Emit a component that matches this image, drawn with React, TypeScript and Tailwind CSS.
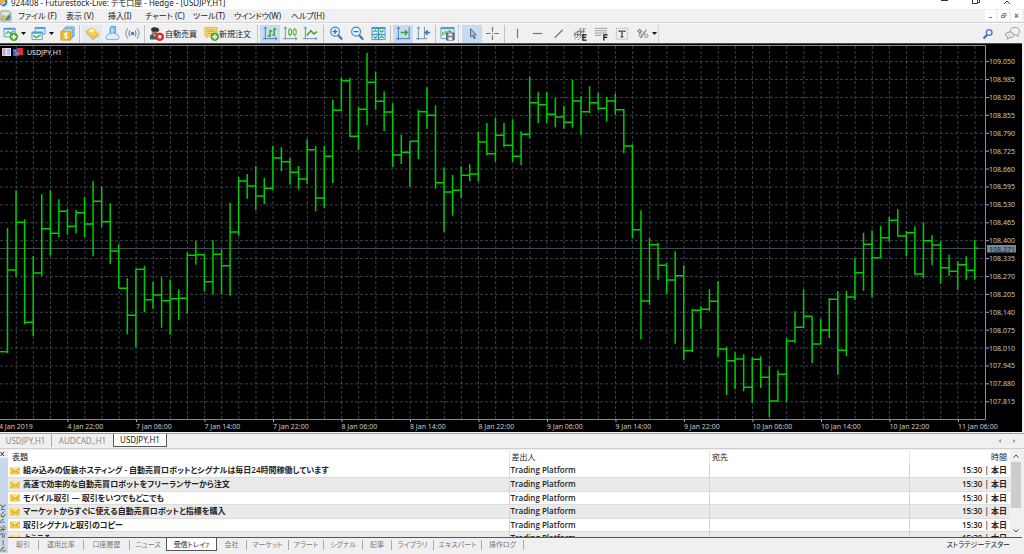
import { useState } from "react";
import type { ReactNode } from "react";
import clsx from "clsx";

const FIRST_X = 7;
const STEP = 8.56;
const TOP = 44;
const UNITS = 3;

// high, low, close (chart units below the top edge)
const bars = [
  [552, 928, 678], [439, 698, 535], [526, 841, 835], [636, 876, 687], [451, 695, 554],
  [439, 635, 568], [466, 580, 502], [495, 572, 547], [498, 568, 506], [460, 579, 540],
  [411, 637, 472], [428, 550, 533], [478, 660, 621], [601, 733, 733], [703, 871, 814],
  [674, 910, 676], [666, 805, 767], [713, 794, 753], [700, 851, 770], [707, 872, 764],
  [736, 829, 763], [625, 809, 634], [591, 662, 632], [631, 741, 713], [589, 751, 631],
  [616, 749, 665], [476, 755, 564], [399, 575, 411], [390, 464, 426], [366, 499, 456],
  [402, 480, 433], [306, 439, 342], [310, 382, 353], [342, 422, 385], [366, 436, 405],
  [286, 420, 317], [307, 502, 462], [305, 491, 337], [167, 417, 199], [101, 200, 110],
  [101, 280, 277], [188, 318, 196], [26, 243, 115], [83, 197, 172], [142, 262, 204],
  [178, 369, 333], [272, 360, 325], [291, 428, 292], [197, 345, 203], [130, 254, 214],
  [184, 434, 416], [371, 564, 444], [393, 515, 439], [367, 462, 394], [361, 412, 390],
  [263, 412, 294], [237, 334, 329], [222, 353, 274], [237, 310, 304], [226, 354, 337],
  [262, 364, 271], [98, 283, 176], [145, 238, 182], [145, 237, 211], [161, 250, 219],
  [186, 254, 235], [107, 251, 171], [157, 274, 203], [127, 207, 176], [146, 199, 193],
  [159, 233, 171], [149, 212, 197], [194, 328, 306], [301, 583, 557], [499, 886, 771],
  [581, 782, 602], [596, 707, 664], [656, 749, 708], [622, 899, 695], [664, 949, 920],
  [795, 924, 799], [787, 854, 796], [736, 802, 772], [712, 938, 915], [908, 1053, 950],
  [925, 1036, 945], [931, 1042, 1030], [940, 1076, 946], [937, 1031, 1000], [965, 1119, 1071],
  [979, 1074, 991], [883, 1074, 891], [802, 898, 850], [736, 852, 817], [817, 958, 900],
  [824, 901, 858], [762, 882, 766], [742, 992, 919], [740, 936, 759], [643, 768, 686],
  [566, 740, 601], [559, 760, 641], [546, 642, 581], [518, 593, 529], [496, 578, 576],
  [561, 636, 566], [547, 692, 690], [537, 702, 590], [574, 664, 603], [592, 719, 671],
  [632, 695, 682], [652, 738, 662], [637, 707, 679], [588, 707, 613],
];

const times = [
  "4 Jan 2019", "4 Jan 22:00", "7 Jan 06:00", "7 Jan 14:00", "7 Jan 22:00",
  "8 Jan 06:00", "8 Jan 14:00", "8 Jan 22:00", "9 Jan 06:00", "9 Jan 14:00",
  "9 Jan 22:00", "10 Jan 06:00", "10 Jan 14:00", "10 Jan 22:00", "11 Jan 06:00",
];

const prices = Array.from({ length: 20 }, (_, i) => (109.05 - i * 0.065).toFixed(3));

const menus = [
  { label: "ファイル (F)", w: "w-12" },
  { label: "表示 (V)", w: "w-[42px]" },
  { label: "挿入(I)", w: "w-[37px]" },
  { label: "チャート (C)", w: "w-12" },
  { label: "ツール(T)", w: "w-[41px]" },
  { label: "ウインドウ(W)", w: "w-[57px]" },
  { label: "ヘルプ(H)", w: "w-10" },
];

const mails = [
  "組み込みの仮装ホスティング - 自動売買ロボットとシグナルは毎日24時間稼働しています",
  "高速で効率的な自動売買ロボットをフリーランサーから注文",
  "モバイル取引 — 取引をいつでもどこでも",
  "マーケットからすぐに使える自動売買ロボットと指標を購入",
  "取引シグナルと取引のコピー",
  "ようこそ",
];

const toolTabs = [
  { label: "取引", w: "w-[31px]" },
  { label: "運用比率", w: "w-[45px]" },
  { label: "口座履歴", w: "w-[46px]" },
  { label: "ニュース", w: "w-9" },
  { label: "受信トレイ", w: "w-[51px]", count: 7 },
  { label: "会社", w: "w-[30px]" },
  { label: "マーケット", w: "w-[42px]" },
  { label: "アラート", w: "w-[35px]" },
  { label: "シグナル", w: "w-[39px]" },
  { label: "記事", w: "w-[29px]" },
  { label: "ライブラリ", w: "w-[42px]" },
  { label: "エキスパート", w: "w-12" },
  { label: "操作ログ", w: "w-[42px]" },
];

const Icon = ({ children }: { children: ReactNode }) => (
  <svg viewBox="0 0 16 16" className="h-[15px] w-[15px] shrink-0" fill="none" aria-hidden="true">{children}</svg>
);

const Caret = () => (
  <svg viewBox="0 0 5 3" className="h-[3px] w-[5px] shrink-0" aria-hidden="true"><path d="M0 0h5L2.500 3z" fill="#111" /></svg>
);

const Sep = () => <div className="h-[18px] w-[5px] shrink-0 border-l-2 border-transparent"><div className="h-full w-px bg-[#c4c4c4]" /></div>;

const Tool = ({ label, w = "w-5", on, soft, children }: { label: string; w?: string; on?: boolean; soft?: boolean; children: ReactNode }) => (
  <button
    type="button"
    aria-label={label}
    className={clsx("flex h-[18px] shrink-0 items-center justify-center", w, on && "bg-[#c2dcf3]", soft && "bg-[#dfeaf5]")}
  >
    {children}
  </button>
);

const Plus = () => (
  <>
    <circle cx="11.500" cy="11.500" r="4" fill="#5cb83f" stroke="#3c9a26" />
    <path d="M11.500 9v5M9 11.500h5" stroke="#fff" strokeWidth="1.500" />
  </>
);

function Toolbar() {
  return (
    <div className="flex h-5 items-center border-t border-[#fafafa] bg-[#f0f0f0] pl-px">
      <button type="button" aria-label="新規チャート" className="flex h-[18px] w-7 shrink-0 items-center gap-[3px] pl-0.5">
        <Icon>
          <path d="M1 2.500h12v9H1z" fill="#eaf6fd" stroke="#4ba0d8" />
          <path d="M1 3h12" stroke="#4ba0d8" strokeWidth="2" />
          <path d="M2.500 9l3-3 2 2 4-3" stroke="#4cae3a" strokeWidth="1.300" />
          <Plus />
        </Icon>
        <Caret />
      </button>
      <button type="button" aria-label="プロファイル" className="flex h-[18px] w-7 shrink-0 items-center gap-[3px] pl-0.5">
        <Icon>
          <path d="M4.500 1.500h10.500v7H4.500z" fill="#d8eefa" stroke="#4ba0d8" />
          <path d="M4.500 2.200h10.500" stroke="#4ba0d8" strokeWidth="2" />
          <path d="M1 6.500h11v8H1z" fill="#eaf6fd" stroke="#4ba0d8" />
          <path d="M1 7.200h11" stroke="#4ba0d8" strokeWidth="2" />
          <path d="M2.500 10l3 2.500 5-3" stroke="#4cae3a" strokeWidth="1.500" />
        </Icon>
        <Caret />
      </button>
      <Tool label="気配値表示">
        <Icon>
          <path d="M6 1h9v10H6z" fill="#b9dcf4" stroke="#4b9cd8" />
          <path d="M4 3h9v10H4z" fill="#d9edfa" stroke="#4b9cd8" />
          <path d="M1 5.500h10.500V15H1z" fill="#f0b92f" stroke="#d29a1a" />
          <path d="M8.500 8H5.500q-1.200 1.200 0 2.200l1.500.2q1.500 1 0 2.200H4.500M6.500 6.500v7.500" stroke="#fffbe8" strokeWidth="1.200" />
        </Icon>
      </Tool>
      <Sep />
      <Tool label="ナビゲータ" soft>
        <Icon>
          <path d="M1 4.500v3L8.500 15l6.500-4.500v-3L8.500 12z" fill="#d69a22" />
          <path d="M1 4.500L7.500 1 15 7.500 8.500 12z" fill="#f8cf55" />
          <path d="M1 6l7.500 7.500L15 9" stroke="#fbe6a0" />
          <path d="M4 5l3.500-2 2.500 2-3 2z" fill="#fff8dc" />
        </Icon>
      </Tool>
      <Tool label="ツールボックス">
        <Icon>
          <path d="M5.500 1.500l2-1h3.500v8H5.500z" fill="#8fcaf5" stroke="#4297dd" />
          <path d="M7.500 3v5" stroke="#fff" />
          <path d="M4 8.500q4-2.500 8 0 3 1 3 3.500 0 2.500-2.500 2.500h-9Q1 14.500 1 12.300 1 9.500 4 8.500z" fill="#e1eefa" stroke="#6baadf" />
        </Icon>
      </Tool>
      <Tool label="シグナル">
        <Icon>
          <circle cx="8" cy="8" r="1.900" fill="#3f7fd0" />
          <path d="M5.500 5a4.200 4.200 0 0 0 0 6M10.500 5a4.200 4.200 0 0 1 0 6" stroke="#6d87a3" strokeWidth="1.200" />
          <path d="M3.200 2.500a8 8 0 0 0 0 11M12.800 2.500a8 8 0 0 1 0 11" stroke="#8d9eaf" strokeWidth="1.200" />
        </Icon>
      </Tool>
      <Sep />
      <button type="button" className="flex h-[18px] w-[55px] shrink-0 items-center gap-px pl-0.5 text-[8px] whitespace-nowrap">
        <Icon>
          <path d="M2 3l3-2 5 1 1 3-3 2-5-1z" fill="#2f3338" />
          <path d="M3 6h6v4H3z" fill="#b78252" />
          <path d="M1 10l3-2h5l3 3v3.500H1z" fill="#4d5863" />
          <path d="M4 8l2.500 3L9 8" stroke="#dce2e8" />
          <circle cx="11.500" cy="11.500" r="4" fill="#e13b2c" stroke="#b62519" />
          <path d="M10 10h3v3h-3z" fill="#fff" />
        </Icon>
        自動売買
      </button>
      <button type="button" className="flex h-[18px] w-[53px] shrink-0 items-center px-0.5 text-[8px] whitespace-nowrap">
        <Icon>
          <path d="M1 1.500h13v9H5l-2 2v-2H1z" fill="#f8dc70" stroke="#d8b448" />
          <path d="M3 4h9M3 6h9M3 8h6" stroke="#b8983c" strokeWidth="0.800" />
          <Plus />
        </Icon>
        新規注文
      </button>
      <Sep />
      <Tool label="バーチャート" on>
        <Icon>
          <path d="M2.500 1v13M1 3l1.500-2L4 3M0 13.500h15M13 12l2 1.500-2 1.500" stroke="#4d79a8" />
          <path d="M7.500 4v8M5 10.500h2.500M7.500 5.500H10M12 2v9M10 9.500h2M12 3.500h2" stroke="#38a42c" strokeWidth="1.500" />
        </Icon>
      </Tool>
      <Tool label="ローソク足">
        <Icon>
          <path d="M2.500 1v13M1 3l1.500-2L4 3M0 13.500h15M13 12l2 1.500-2 1.500" stroke="#6b8db2" />
          <path d="M7.500 2v9M12.500 2v9" stroke="#44a63a" />
          <path d="M6 4h3v5H6zM11 4h3v5h-3z" fill="#e2f7df" stroke="#44a63a" />
        </Icon>
      </Tool>
      <Tool label="ラインチャート" w="w-[21px]">
        <Icon>
          <path d="M2.500 1v13M1 3l1.500-2L4 3M0 13.500h15M13 12l2 1.500-2 1.500" stroke="#6b8db2" />
          <path d="M4 10l4.500-5 3 3.500L15 6" stroke="#44a63a" strokeWidth="1.600" />
        </Icon>
      </Tool>
      <Sep />
      <Tool label="拡大" w="w-[21px]">
        <Icon>
          <path d="M9.500 9.500l4.500 5" stroke="#3f76b8" strokeWidth="2.400" />
          <circle cx="6.500" cy="6" r="4.700" fill="#e2f2fc" stroke="#3f8fd0" strokeWidth="1.300" />
          <path d="M6.500 3.500v5M4 6h5" stroke="#2d6fae" strokeWidth="1.300" />
        </Icon>
      </Tool>
      <Tool label="縮小" w="w-[21px]">
        <Icon>
          <path d="M9.500 9.500l4.500 5" stroke="#3f76b8" strokeWidth="2.400" />
          <circle cx="6.500" cy="6" r="4.700" fill="#e2f2fc" stroke="#3f8fd0" strokeWidth="1.300" />
          <path d="M4 6h5" stroke="#2d6fae" strokeWidth="1.300" />
        </Icon>
      </Tool>
      <Tool label="タイル表示" w="w-5">
        <Icon>
          <path d="M1 1.500h14v13H1z" fill="#edf8ff" stroke="#3f93d3" />
          <path d="M1 2.500h14M1 9h14M8 1v14" stroke="#3f93d3" strokeWidth="1.600" />
          <path d="M2.500 6.500l2-2 2 2M9.500 4.500l2 2 2-2M2.500 11l2 2 2-2M9.500 13l2-2 2 2" stroke="#41aa32" strokeWidth="1.300" />
        </Icon>
      </Tool>
      <Sep />
      <Tool label="自動スクロール" on>
        <Icon>
          <path d="M2.500 1v14M0 13.500h15M14 1v12.500M1 3l1.500-2L4 3" stroke="#4d79a8" />
          <path d="M5 7h7M9.500 4.500L12 7 9.500 9.500" stroke="#3aa42e" strokeWidth="1.600" />
        </Icon>
      </Tool>
      <Tool label="チャートシフト">
        <Icon>
          <path d="M2.500 1v14M0 13.500h12M9 1v12.500M1 3l1.500-2L4 3" stroke="#6b8db2" />
          <path d="M10 7h5M12.500 4.500L10 7l2.500 2.500" stroke="#3378c4" strokeWidth="1.500" />
        </Icon>
      </Tool>
      <Sep />
      <Tool label="定型チャート" w="w-[18px]">
        <Icon>
          <path d="M1 1.500h14v12H1z" fill="#e9f6fd" stroke="#4ba0d8" />
          <path d="M1 2.500h14" stroke="#4ba0d8" strokeWidth="2" />
          <path d="M3 10V6M5.500 9V5M7 7l3-2 3 2" stroke="#43a936" strokeWidth="1.300" />
          <path d="M7 7.500h8V15H7z" fill="#777f87" stroke="#565d64" />
          <path d="M9 8h4v2.500H9zM9 12h4v3H9z" fill="#edf0f2" />
        </Icon>
      </Tool>
      <div className="mx-0.5 h-[18px] w-0.5 border-l border-dotted border-[#a7a7a7]" />
      <Tool label="カーソル" on>
        <Icon><path d="M6 3v9l2-2 1.500 3.500 1.500-.700L9.500 9.500H12z" fill="#b8c1c9" stroke="#59636c" /></Icon>
      </Tool>
      <Tool label="十字カーソル">
        <Icon>
          <path d="M8 1v5M8 10v5M1 8h5M10 8h5" stroke="#777" strokeWidth="1.300" />
          <path d="M7.500 8h1" stroke="#777" />
        </Icon>
      </Tool>
      <Sep />
      <Tool label="垂直線"><Icon><path d="M8 3v10" stroke="#777" strokeWidth="1.300" /></Icon></Tool>
      <Tool label="水平線"><Icon><path d="M3 8h10" stroke="#777" strokeWidth="1.300" /></Icon></Tool>
      <Tool label="トレンドライン" w="w-[22px]"><Icon><path d="M4 12.500L12.500 4" stroke="#777" strokeWidth="1.300" /></Icon></Tool>
      <Tool label="チャネル" w="w-[22px]">
        <Icon>
          <path d="M1 10l8-8M2 14L14 2M5 15l6-6M2 6v6M5 5v7M8 3v8M11 2v6M1 9h9M4 6h9" stroke="#777" strokeWidth="0.900" />
          <path d="M14.500 9.500h-4v5.500h4M10.500 12.200h3.500" stroke="#111" strokeWidth="1.300" />
        </Icon>
      </Tool>
      <Tool label="フィボナッチ">
        <Icon>
          <path d="M1 2.500h13M1 5h13M1 7.500h13M1 10h7" stroke="#999" />
          <path d="M14.500 9.500h-4V15.500M10.500 12.200h3.500" stroke="#111" strokeWidth="1.300" />
        </Icon>
      </Tool>
      <Tool label="テキスト" w="w-[21px]">
        <Icon>
          <path d="M2.500 2.500h12v11.500h-12z" stroke="#999" strokeDasharray="1 1" />
          <path d="M5.500 6.500V5.500h6v1M8.500 5.500v6M7 11.500h3" stroke="#555" strokeWidth="1.500" />
        </Icon>
      </Tool>
      <button type="button" aria-label="オブジェクト" className="flex h-[18px] w-[27px] shrink-0 items-center gap-0.5 border-r border-[#d5d5d5] pl-[3px]">
        <Icon>
          <path d="M3 5.500l2-2 2 2-2 2zM6 13l6-9" stroke="#888" strokeWidth="1.300" />
          <circle cx="6" cy="10" r="1.500" stroke="#888" />
          <circle cx="12" cy="10.500" r="1.800" stroke="#888" />
          <path d="M8 6l2 2" stroke="#888" />
        </Icon>
        <Caret />
      </button>
      <div className="ml-auto flex items-center gap-2 pr-1">
        <Tool label="検索" w="w-4">
          <svg viewBox="0 0 16 16" className="h-3 w-3" fill="none" aria-hidden="true">
            <path d="M2 14l5-5" stroke="#4576ca" strokeWidth="3.200" />
            <circle cx="9.500" cy="6" r="3.800" fill="#e8f0fc" stroke="#4576ca" strokeWidth="1.800" />
          </svg>
        </Tool>
        <Tool label="チャット" w="w-4">
          <Icon>
            <path d="M10 1.500c3.500 0 5.500 1.800 5.500 4s-1 3-2 3.500l.5 2-2.500-1.500c-4 0-6-1.500-6-4s2-4 4.500-4z" fill="#f1f1f1" stroke="#999" />
            <path d="M5 6.500c3 0 4.500 1.300 4.500 3s-1.500 3-4.500 3L2.500 14l.3-2C1.500 11.500.5 10.700.5 9.500c0-1.700 1.700-3 4.500-3z" fill="#e4e4e4" stroke="#999" />
          </Icon>
        </Tool>
      </div>
    </div>
  );
}

function PriceChart() {
  const y = (v: number) => TOP + v / UNITS;
  return (
    <svg viewBox="0 43 1024 390" className="block w-full" role="img" aria-label="USDJPY,H1">
      <rect x="0" y="43" width="1024" height="390" fill="#f0f0f0" />
      <rect x="0" y="43" width="1022" height="389" fill="#000" />
      <path d="M0 43.500h1022" stroke="#4c4f4a" />
      {Array.from({ length: 57 }, (_, i) => 16.3 + i * STEP * 2).map((x) => (
        <path key={x} d={`M${x} 46V419`} stroke="#46525e" strokeWidth="0.800" strokeDasharray="3 2" />
      ))}
      {prices.map((p, i) => {
        const py = y(53 + i * 53.700);
        return (
          <g key={p}>
            <path d={`M0 ${py}H985`} stroke="#46525e" strokeWidth="0.800" strokeDasharray="3 2" />
            <path d={`M986 ${py}h3`} stroke="#aaa" />
            <text x="989" y={py + 2.500} fontSize="7" fill="#c8c8c8">{p}</text>
          </g>
        );
      })}
      <path d="M0 45.500H985.500V419.500H0" fill="none" stroke="#8c8c8c" />
      <path d="M0 248.500H985" stroke="#3e4a55" />
      {bars.map(([high, low, close], i) => {
        const x = FIRST_X + 0.500 + i * STEP;
        const next = i === bars.length - 1 ? x + 3 : x + STEP;
        return (
          <path key={i} d={`M${x} ${y(high)}V${y(low)}M${x} ${y(close)}H${next}`} stroke="#00cc00" strokeWidth="1.500" />
        );
      })}
      <path d={`M0 ${y(923)}H7.500`} stroke="#00cc00" strokeWidth="1.500" />
      {times.map((t, i) => (
        <g key={t}>
          {i > 0 && <path d={`M${i * 68.5 - 0.5} 420v2`} stroke="#aaa" />}
          <text x={i === 0 ? -1 : i * 68.5 - 1} y="428.500" fontSize="7" fill="#c8c8c8">{t}</text>
        </g>
      ))}
      <rect x="987" y="245" width="29" height="7.500" fill="#778899" />
      <text x="989" y="251.500" fontSize="7" fill="#18222c">108.371</text>
      <rect x="2" y="48" width="9" height="8" fill="#dfe3ff" />
      <path d="M2 48h4v8H2z" fill="#f0c0c8" />
      <path d="M7 50h3M7 52h3M7 54h3M3 50h2M3 52h2M3 54h2" stroke="#6a72cc" strokeWidth="0.700" />
      <path d="M13 49h6v7h-6z" fill="#3c5cc8" />
      <path d="M17 48h6v7h-5z" fill="#d4333c" />
      <path d="M14 50l3 3M15 55l4-2" stroke="#9aaef0" />
      <text x="27" y="54.500" fontSize="7" fill="#f0f0f0">USDJPY,H1</text>
    </svg>
  );
}

const Mail = () => (
  <svg viewBox="0 0 10 9" className="h-[9px] w-2.5 shrink-0" aria-hidden="true">
    <path d="M0 1h10v7.500H0z" fill="#f5cd4c" />
    <path d="M0 1h10L5 5.500z" fill="#fbe38a" />
    <path d="M1 2.500l4 3 4-3M1.500 7.500L4 5M8.500 7.500L6 5" fill="none" stroke="#cf9a28" strokeWidth="0.800" />
  </svg>
);

function Inbox() {
  return (
    <div className="flex h-[87px] overflow-hidden bg-white">
      <div className="min-w-0 flex-1 overflow-hidden">
        <table className="w-full table-fixed border-collapse font-['Open_Sans','Noto_Sans_CJK_JP',sans-serif] text-[8px] leading-[12px] whitespace-nowrap text-[#222]">
          <colgroup>
            <col className="w-[50%]" />
            <col className="w-[20%]" />
            <col className="w-[20%]" />
            <col className="w-[10%]" />
          </colgroup>
          <thead>
            <tr className="h-3.5 text-left">
              <th className="border-r border-[#e2e2e2] p-0 pl-1 font-normal">表題</th>
              <th className="border-r border-[#e2e2e2] p-0 pl-0.5 font-normal">差出人</th>
              <th className="border-r border-[#e2e2e2] p-0 pl-0.5 font-normal">宛先</th>
              <th className="p-0 pr-[3px] text-right font-normal">時間</th>
            </tr>
          </thead>
          <tbody>
            {mails.map((title) => (
              <tr key={title} className="h-[13px] border-b border-[#dcdcdc] font-semibold even:h-3.5 even:bg-[#eaeaea]">
                <td className="overflow-hidden border-r border-[#d4d4d4] p-0 pl-0.5">
                  <span className="flex items-center gap-[3px]"><Mail />{title}</span>
                </td>
                <td className="border-r border-[#d4d4d4] p-0 pl-px">Trading Platform</td>
                <td className="border-r border-[#d4d4d4] p-0" />
                <td className="p-0 pr-[3px] text-right">15:30 | 本日</td>
              </tr>
            ))}
          </tbody>
        </table>
      </div>
      <div className="flex w-3 flex-col items-center bg-[#f0f0f0]">
        <button type="button" aria-label="上へ" className="flex h-3 w-full items-center justify-center">
          <svg viewBox="0 0 6 4" className="h-1 w-1.5"><path d="M.5 3.500L3 1l2.500 2.500" fill="none" stroke="#444" /></svg>
        </button>
        <div className="h-[46px] w-2.5 bg-[#cdcdcd]" />
        <button type="button" aria-label="下へ" className="mt-auto flex h-3 w-full items-center justify-center">
          <svg viewBox="0 0 6 4" className="h-1 w-1.5"><path d="M.5.500L3 3 5.500.500" fill="none" stroke="#444" /></svg>
        </button>
      </div>
    </div>
  );
}

export default function App() {
  const [chartTab, setChartTab] = useState(2);
  const [toolTab, setToolTab] = useState("受信トレイ");

  return (
    <div className="flex min-h-screen flex-col overflow-hidden bg-[#f0f0f0] font-['Noto_Sans','Noto_Sans_CJK_JP',sans-serif] text-[#222] [font-feature-settings:'palt']">
      <header className="flex h-[9px] items-end justify-between overflow-hidden bg-white">
        <div className="flex items-end gap-[3px]">
          <svg viewBox="0 0 8 9" className="h-[9px] w-2" aria-hidden="true">
            <circle cx="3" cy="2" r="4.500" fill="#3d82be" />
            <path d="M0 0h5v4H0z" fill="#e9aa3c" />
            <path d="M0 6l5-4" stroke="#fff" />
          </svg>
          <h1 className="pb-px text-[8px] leading-[10px] whitespace-nowrap">924408 - Futurestock-Live: デモ口座 - Hedge - [USDJPY,H1]</h1>
        </div>
        <div className="flex h-full items-start">
          <button type="button" aria-label="最小化" className="w-8"><svg viewBox="0 0 32 5" className="h-[5px] w-8"><path d="M13 .5h7" stroke="#333" /></svg></button>
          <button type="button" aria-label="元に戻す" className="w-8"><svg viewBox="0 0 32 5" className="h-[5px] w-8"><path d="M12.500 0v3.500h5V0M17.500 2.500h2V0" fill="none" stroke="#333" /></svg></button>
          <button type="button" aria-label="閉じる" className="w-8"><svg viewBox="0 0 32 5" className="h-[5px] w-8"><path d="M12 4l3-3 3 3" fill="none" stroke="#333" /></svg></button>
        </div>
      </header>

      <nav className="flex h-[14px] items-center border-b border-[#d4d4d4]">
        <svg viewBox="0 0 12 12" className="mr-1.5 h-3 w-3 shrink-0" aria-hidden="true">
          <path d="M1 1h8l2 2v8H1z" fill="#dce7e8" stroke="#8c9ea6" />
          <path d="M1 8l3-3 2 2 4-4v7H1z" fill="#6fae76" />
          <circle cx="4" cy="8" r="2.500" fill="#e2b84e" />
          <path d="M6 10l4-4" stroke="#416f9c" strokeWidth="1.500" />
        </svg>
        {menus.map((m) => (
          <button key={m.label} type="button" className={clsx("shrink-0 text-left text-[8px] leading-3 whitespace-nowrap", m.w)}>{m.label}</button>
        ))}
        <div className="ml-auto flex gap-0.5 pr-0.5">
          <button type="button" aria-label="ウインドウを最小化" className="h-[11px] w-[11px] bg-white"><svg viewBox="0 0 11 11"><path d="M4 7.500h3" stroke="#6d7f94" /></svg></button>
          <button type="button" aria-label="ウインドウを戻す" className="h-[11px] w-[11px] bg-white"><svg viewBox="0 0 11 11"><path d="M5 5V3.500h3V6H7M3.500 5.500h3v2h-3z" fill="none" stroke="#6d7f94" /></svg></button>
          <button type="button" aria-label="ウインドウを閉じる" className="h-[11px] w-[11px] bg-white"><svg viewBox="0 0 11 11"><path d="M4 4l3 3.500M7 4L4 7.500" stroke="#6d7f94" strokeWidth="1.300" /></svg></button>
        </div>
      </nav>

      <Toolbar />
      <PriceChart />

      <div className="flex h-4 items-start border-t border-b border-t-[#a0a0a0] border-b-[#d0d0d0] text-[8px] leading-3">
        {["USDJPY,H1", "AUDCAD,,H1", "USDJPY,H1"].map((t, i) => (
          <button
            key={i}
            type="button"
            onClick={() => setChartTab(i)}
            className={clsx(
              "h-[13px] shrink-0 whitespace-nowrap",
              i === 0 ? "w-[52px]" : i === 1 ? "w-[61px]" : "w-[54px]",
              i === chartTab ? "border border-t-0 border-[#555] bg-white" : "text-[#8a8a8a]",
              i === 0 && i !== chartTab && "border-r border-[#aaa]",
            )}
          >
            {t}
          </button>
        ))}
        <div className="ml-auto flex gap-2 pt-1 pr-[7px]">
          <button type="button" aria-label="前へ"><svg viewBox="0 0 6 6" className="h-1.5 w-1.5"><path d="M4 1v4L1.500 3z" fill="#999" /></svg></button>
          <button type="button" aria-label="次へ"><svg viewBox="0 0 6 6" className="h-1.5 w-1.5"><path d="M2 1v4l2.500-2z" fill="#999" /></svg></button>
        </div>
      </div>

      <section className="flex pt-px">
        <div className="flex w-2 shrink-0 flex-col">
          <button type="button" aria-label="ツールボックスを閉じる" className="h-2 w-[5px]"><svg viewBox="0 0 5 8" className="h-2 w-[5px]"><path d="M.5 2l3.500 4M4 2L.5 6" stroke="#333" /></svg></button>
          <div className="flex flex-1 items-end bg-[#c9d9ea] text-[7px] leading-[8px] whitespace-nowrap">
            <span className="rotate-180 [writing-mode:vertical-rl]">ツールボックス</span>
          </div>
        </div>
        <div className="min-w-0 flex-1 pr-0.5">
          <Inbox />
          <div className="flex h-4 items-start border-t border-[#555] text-[7px] leading-[13px]">
            {toolTabs.map((t, i) => {
              const active = t.label === toolTab;
              const nextActive = toolTabs[i + 1]?.label === toolTab;
              return (
                <button
                  key={t.label}
                  type="button"
                  onClick={() => setToolTab(t.label)}
                  className={clsx("flex h-[13px] shrink-0 items-center justify-center whitespace-nowrap", t.w, active ? "border border-t-0 border-[#555] bg-white" : "text-[#777]")}
                >
                  <span className="flex-1 text-center">{t.label}{t.count && <sub className="text-[7px] text-red-600">{t.count}</sub>}</span>
                  {!active && !nextActive && <span className="h-2.5 w-px bg-[#aaa]" />}
                </button>
              );
            })}
            <button type="button" className="ml-auto pr-3 whitespace-nowrap">ストラテジーテスター</button>
          </div>
        </div>
      </section>
    </div>
  );
}
